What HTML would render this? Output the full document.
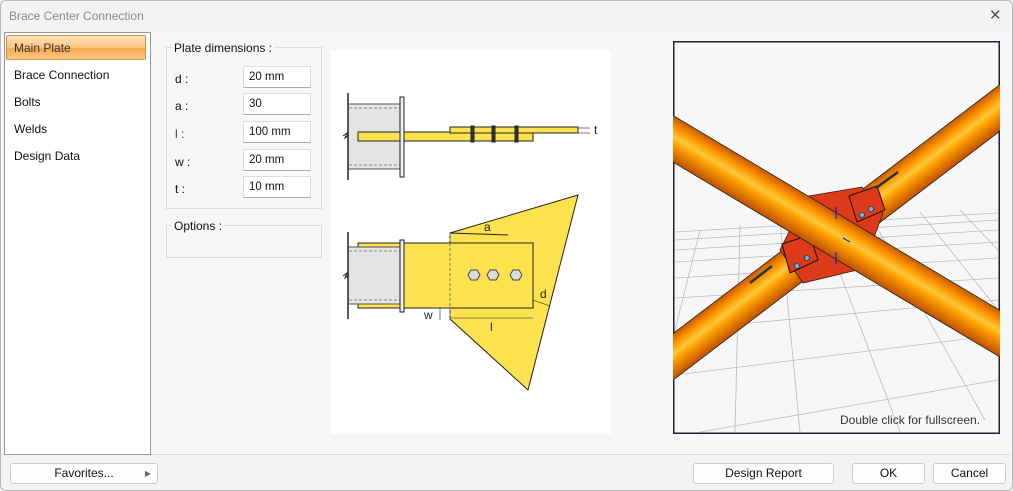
<!DOCTYPE html>
<html><head><meta charset="utf-8"><style>
*{margin:0;padding:0;box-sizing:border-box}
body{width:1013px;height:491px;overflow:hidden;background:#f0f0f0;font-family:"Liberation Sans",sans-serif;font-size:12px;color:#111;position:relative}
.win{position:absolute;left:0;top:0;width:1013px;height:491px;border:1px solid #b8b8b8;border-radius:6px;background:#f3f3f3}
.title{position:absolute;left:9px;top:9px;color:#8a8a8a;font-size:12px}
.close{position:absolute;left:989px;top:6px;font-size:15px;color:#555}
.content{position:absolute;left:1px;top:31px;width:1010px;height:424px;background:#f7f7f7;border-bottom:1px solid #ddd}
.list{position:absolute;left:4px;top:32px;width:147px;height:423px;background:#fff;border:1px solid #999}
.sel{position:absolute;left:6px;top:35px;width:140px;height:25px;border:1px solid #d9923a;border-radius:2px;background:linear-gradient(#fde3bf,#fbc57f 50%,#f7a84a 55%,#fbc98b)}
.item{position:absolute;left:14px;font-size:12px}
.gb{position:absolute;border:1px solid #ddd}
.gl{position:absolute;background:#f7f7f7;padding:0 2px;font-size:12px}
.lab{position:absolute;left:175px;font-size:12px}
.inp{position:absolute;left:243px;width:68px;height:22px;background:#fff;border:1px solid #ddd;border-bottom:1px solid #aaa;padding:4px 0 0 5px;font-size:11.5px}
.btn{position:absolute;top:463px;height:21px;background:#fdfdfd;border:1px solid #ccc;border-radius:3px;text-align:center;font-size:12px;line-height:19px}
</style></head><body>
<div class="win"></div>
<div class="title">Brace Center Connection</div>
<div class="close">✕</div>
<div class="content"></div>
<div class="list"></div>
<div class="sel"></div>
<div class="item" style="top:41px;color:#333">Main Plate</div>
<div class="item" style="top:68px">Brace Connection</div>
<div class="item" style="top:95px">Bolts</div>
<div class="item" style="top:122px">Welds</div>
<div class="item" style="top:149px">Design Data</div>

<div class="gb" style="left:166px;top:47px;width:156px;height:162px"></div>
<div class="gl" style="left:172px;top:41px">Plate dimensions :</div>
<div class="lab" style="top:72px">d :</div><div class="inp" style="top:66px">20 mm</div>
<div class="lab" style="top:99px">a :</div><div class="inp" style="top:93px">30</div>
<div class="lab" style="top:127px;color:#2a3a8a">l :</div><div class="inp" style="top:121px">100 mm</div>
<div class="lab" style="top:155px">w :</div><div class="inp" style="top:149px">20 mm</div>
<div class="lab" style="top:182px">t :</div><div class="inp" style="top:176px">10 mm</div>
<div class="gb" style="left:166px;top:225px;width:156px;height:33px"></div>
<div class="gl" style="left:172px;top:219px">Options :</div>

<svg style="position:absolute;left:331px;top:50px" width="280" height="384" viewBox="331 50 280 384">
<rect x="331" y="50" width="280" height="384" fill="#fff"/>
<g stroke="#222" stroke-width="1">
<rect x="348" y="104" width="52" height="65" fill="#e4e4e4" stroke="#555"/>
<line x1="349" y1="108" x2="400" y2="108" stroke="#888" stroke-dasharray="3,2"/>
<line x1="349" y1="165" x2="400" y2="165" stroke="#888" stroke-dasharray="3,2"/>
<line x1="348" y1="93" x2="348" y2="180" stroke-width="1.5"/>
<rect x="358" y="132" width="175" height="9" fill="#fde24f"/>
<rect x="450" y="127" width="128" height="6" fill="#fde24f"/>
<rect x="400" y="97" width="4" height="80" fill="#eee"/>
<rect x="471" y="126" width="3" height="16" fill="#333"/>
<rect x="492" y="126" width="3" height="16" fill="#333"/>
<rect x="515" y="126" width="3" height="16" fill="#333"/>
<polygon points="450,233 578,195 528,390 450,319" fill="#fde24f"/>
<rect x="358" y="243" width="45" height="65" fill="#fde24f"/>
<rect x="348" y="247" width="52" height="57" fill="#e4e4e4" stroke="#555"/>
<line x1="349" y1="251" x2="400" y2="251" stroke="#888" stroke-dasharray="3,2"/>
<line x1="349" y1="300" x2="400" y2="300" stroke="#888" stroke-dasharray="3,2"/>
<line x1="348" y1="232" x2="348" y2="319" stroke-width="1.5"/>
<rect x="403" y="243" width="130" height="65" fill="#fde24f"/>
<rect x="400" y="240" width="4" height="72" fill="#eee"/>
<line x1="450" y1="233" x2="450" y2="319" stroke="#777" stroke-dasharray="3,2"/>
<line x1="450" y1="233" x2="508" y2="235"/>
<line x1="450" y1="318" x2="533" y2="318" stroke-width=".6"/>
<line x1="440" y1="308" x2="440" y2="320" stroke-width=".6"/>
<line x1="533" y1="300" x2="550" y2="306" stroke-width=".6"/>
<line x1="578" y1="128" x2="590" y2="128" stroke-width=".6"/>
<line x1="578" y1="133" x2="590" y2="133" stroke-width=".6"/>
<g fill="#ddd" stroke="#444"><polygon points="468,275 471,270 477,270 480,275 477,280 471,280"/><polygon points="487,275 490,270 496,270 499,275 496,280 490,280"/><polygon points="510,275 513,270 519,270 522,275 519,280 513,280"/></g>
</g>
<g font-size="12" fill="#222" font-family="Liberation Sans,sans-serif">
<text x="594" y="134">t</text><text x="484" y="231">a</text><text x="540" y="298">d</text><text x="424" y="319">w</text><text x="490" y="331">l</text>
</g>
<path d="M343 136 l4 -3 l-2 5 l4 -3" stroke="#222" fill="none"/>
<path d="M343 276 l4 -3 l-2 5 l4 -3" stroke="#222" fill="none"/>
</svg>

<svg style="position:absolute;left:673px;top:41px" width="327" height="393" viewBox="673 41 327 393">
<defs>
<linearGradient id="tg" x1="0" y1="0" x2="0" y2="1"><stop offset="0" stop-color="#c85a00"/><stop offset=".25" stop-color="#ff9800"/><stop offset=".45" stop-color="#ffc93a"/><stop offset=".6" stop-color="#ffa000"/><stop offset="1" stop-color="#c05000"/></linearGradient>
</defs>
<rect x="673" y="41" width="327" height="393" fill="#f7f7f7" stroke="#1f1f3a" stroke-width="3"/>
<g stroke="#bbb" stroke-width=".8" fill="none">
<path d="M675 232 L998 213"/><path d="M675 240 L998 220"/><path d="M675 250 L998 230"/><path d="M675 262 L998 242"/><path d="M675 278 L998 258"/><path d="M675 298 L998 278"/><path d="M675 330 L998 300"/><path d="M675 375 L998 335"/><path d="M700 432 L998 380"/>
<path d="M700 230 L675 330"/><path d="M740 225 L735 432"/><path d="M780 222 L800 432"/><path d="M820 220 L900 432"/><path d="M870 215 L985 420"/><path d="M920 212 L998 310"/><path d="M960 210 L998 250"/>
</g>
<g transform="translate(675,356) rotate(-37.3)"><rect x="-20" y="-19" width="460" height="37" fill="url(#tg)" stroke="#222" stroke-width=".8"/></g>
<polygon points="803,197 862,187 883,213 873,240 857,270 803,283 780,250 790,230" fill="#dc3a18" stroke="#222" stroke-width=".8"/>
<polygon points="849,196 877,186 885,210 857,222" fill="#dc3a18" stroke="#111"/>
<polygon points="782,244 810,235 818,260 790,273" fill="#dc3a18" stroke="#111"/>
<g fill="#4cc0ff" stroke="#222" stroke-width=".6"><circle cx="862" cy="215" r="2.5"/><circle cx="871" cy="209" r="2.5"/><circle cx="797" cy="266" r="2.5"/><circle cx="807" cy="258" r="2.5"/></g>
<g transform="translate(675,140) rotate(30.8)"><rect x="-20" y="-20" width="420" height="40" fill="url(#tg)" stroke="#222" stroke-width=".8"/></g>
<g stroke="#1020e0" stroke-width="1.2"><path d="M836 207 v12"/><path d="M836 252 v12"/><path d="M843 238 l7 4"/></g>
<path d="M876 188 l22 -16" stroke="#234" stroke-width="2.5"/><path d="M750 283 l22 -17" stroke="#234" stroke-width="2.5"/>
<text x="840" y="424" font-size="12" fill="#333" font-family="Liberation Sans,sans-serif">Double click for fullscreen.</text>
</svg>

<div class="btn" style="left:10px;width:148px">Favorites...<span style="position:absolute;right:6px;font-size:8px;color:#666">▶</span></div>
<div class="btn" style="left:693px;width:141px">Design Report</div>
<div class="btn" style="left:852px;width:73px">OK</div>
<div class="btn" style="left:933px;width:73px">Cancel</div>
</body></html>
